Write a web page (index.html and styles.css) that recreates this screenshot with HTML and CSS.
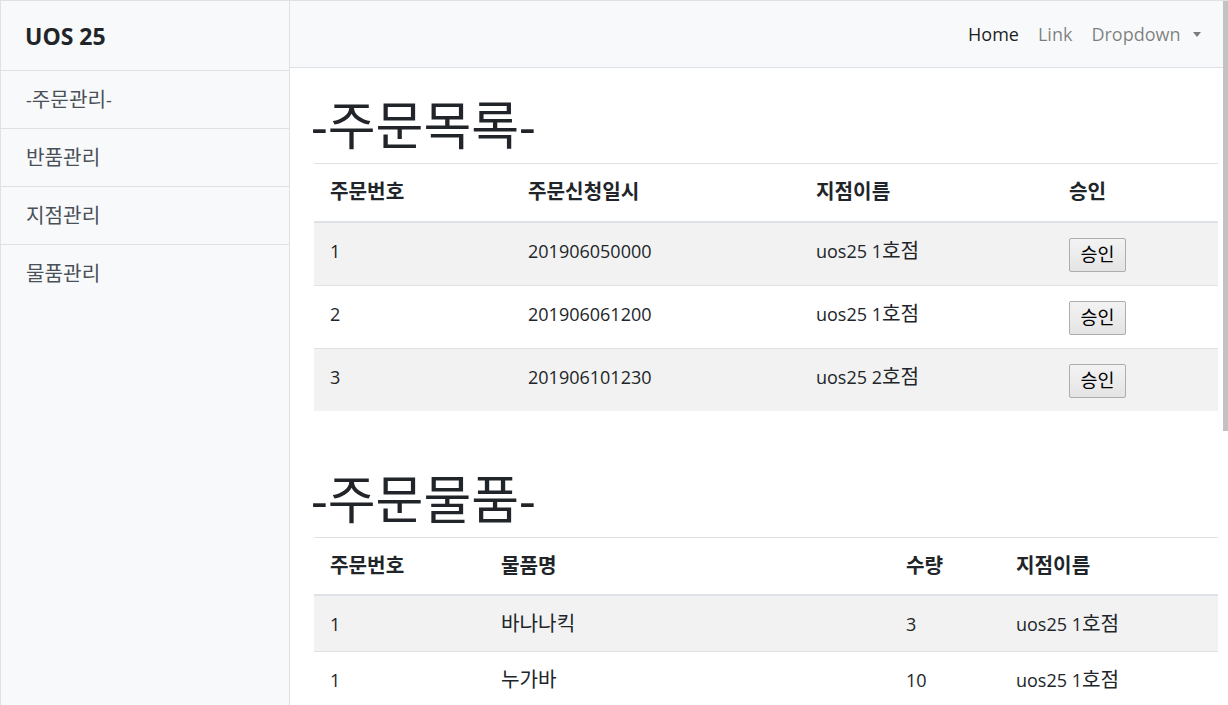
FILE: index.html
```html
<!DOCTYPE html>
<html lang="ko">
<head>
<meta charset="utf-8">
<title>UOS 25</title>
<link rel="stylesheet" href="styles.css">
</head>
<body>
<div class="app">
  <aside class="sidebar">
    <div class="sidebar-heading">UOS 25</div>
    <nav class="side-list">
      <a class="side-item" href="#">-<span class="ko">주문관리</span>-</a>
      <a class="side-item" href="#"><span class="ko">반품관리</span></a>
      <a class="side-item" href="#"><span class="ko">지점관리</span></a>
      <a class="side-item" href="#"><span class="ko">물품관리</span></a>
    </nav>
  </aside>
  <div class="main">
    <header class="topbar">
      <ul class="nav">
        <li><a class="nav-link active" href="#">Home</a></li>
        <li><a class="nav-link" href="#">Link</a></li>
        <li><a class="nav-link" href="#">Dropdown<span class="caret"></span></a></li>
      </ul>
    </header>
    <div class="content">
      <section class="block">
        <h1 class="title">-주문목록-</h1>
        <table class="table orders">
          <colgroup>
            <col class="c1"><col class="c2"><col class="c3"><col class="c4">
          </colgroup>
          <thead>
            <tr><th><span class="ko">주문번호</span></th><th><span class="ko">주문신청일시</span></th><th><span class="ko">지점이름</span></th><th><span class="ko">승인</span></th></tr>
          </thead>
          <tbody>
            <tr><td>1</td><td>201906050000</td><td>uos25 1<span class="ko">호점</span></td><td><button class="btn"><span class="ko">승인</span></button></td></tr>
            <tr><td>2</td><td>201906061200</td><td>uos25 1<span class="ko">호점</span></td><td><button class="btn"><span class="ko">승인</span></button></td></tr>
            <tr><td>3</td><td>201906101230</td><td>uos25 2<span class="ko">호점</span></td><td><button class="btn"><span class="ko">승인</span></button></td></tr>
          </tbody>
        </table>
      </section>
      <section class="block second">
        <h1 class="title">-주문물품-</h1>
        <table class="table items">
          <colgroup>
            <col class="d1"><col class="d2"><col class="d3"><col class="d4">
          </colgroup>
          <thead>
            <tr><th><span class="ko">주문번호</span></th><th><span class="ko">물품명</span></th><th><span class="ko">수량</span></th><th><span class="ko">지점이름</span></th></tr>
          </thead>
          <tbody>
            <tr><td>1</td><td><span class="ko">바나나킥</span></td><td>3</td><td>uos25 1<span class="ko">호점</span></td></tr>
            <tr><td>1</td><td><span class="ko">누가바</span></td><td>10</td><td>uos25 1<span class="ko">호점</span></td></tr>
          </tbody>
        </table>
      </section>
    </div>
  </div>
  <div class="scroll-thumb"></div>
</div>
</body>
</html>
```

FILE: styles.css
```css
* { box-sizing: border-box; }

html, body {
  margin: 0;
  padding: 0;
  height: 100%;
  overflow: hidden;
}

body {
  font-family: "Open Sans", "Noto Sans CJK KR", sans-serif;
  font-size: 18px;
  color: #212529;
  background: #fff;
}

.ko {
  font-size: 1.12em;
  line-height: 1;
}

.app {
  display: flex;
  height: 705px;
  overflow: hidden;
  border-top: 1px solid #dfe1e5;
  border-left: 1px solid #dfe1e5;
  position: relative;
}

/* Sidebar */
.sidebar {
  flex: 0 0 289px;
  width: 289px;
  background: #f8f9fa;
  border-right: 1px solid #dee2e6;
}

.sidebar-heading {
  height: 69px;
  display: flex;
  align-items: center;
  padding-left: 24px;
  font-weight: 700;
  font-size: 23px;
  color: #212529;
}

.side-list {
  display: flex;
  flex-direction: column;
}

.side-item {
  display: flex;
  align-items: center;
  height: 58px;
  padding-left: 25px;
  border-top: 1px solid #dee2e6;
  color: #495057;
  text-decoration: none;
  font-size: 18px;
}

/* Main */
.main {
  flex: 1;
  min-width: 0;
  display: flex;
  flex-direction: column;
}

.topbar {
  height: 67px;
  flex: 0 0 67px;
  background: #f8f9fa;
  border-bottom: 1px solid #dee2e6;
  display: flex;
  align-items: center;
  justify-content: flex-end;
  padding-right: 18px;
}

.nav {
  list-style: none;
  margin: 0;
  padding: 0;
  display: flex;
  align-items: center;
}

.nav-link {
  display: flex;
  align-items: center;
  padding: 0 9.5px;
  color: rgba(0, 0, 0, 0.5);
  text-decoration: none;
  font-size: 18px;
  line-height: 27px;
}

.nav-link.active {
  color: rgba(0, 0, 0, 0.9);
}

.caret {
  display: inline-block;
  margin-left: 12px;
  width: 0;
  height: 0;
  border-top: 5px solid rgba(0, 0, 0, 0.5);
  border-left: 4.5px solid transparent;
  border-right: 4.5px solid transparent;
}

.content {
  padding: 26px 10px 0 24px;
}

.title {
  margin: 0 0 7px -3px;
  font-size: 52px;
  font-weight: 400;
  line-height: 62px;
  color: #212529;
}

.second {
  margin-top: 57px;
}

/* Tables */
.table {
  width: 100%;
  border-collapse: collapse;
  table-layout: fixed;
}

.table th,
.table td {
  text-align: left;
  vertical-align: top;
  padding: 15px 16px 14px;
  line-height: 26px;
  height: 56px;
  border-top: 1px solid #dee2e6;
}

.orders td {
  padding-bottom: 13px;
}

.table th {
  font-weight: 700;
  height: 58px;
}

.table thead th {
  border-bottom: 2px solid #dee2e6;
}

.table tbody tr:nth-child(odd) {
  background: #f2f2f2;
}

.orders .c1 { width: 198px; }
.orders .c2 { width: 288px; }
.orders .c3 { width: 253px; }
.orders .c4 { width: auto; }

.items .d1 { width: 171px; }
.items .d2 { width: 405px; }
.items .d3 { width: 110px; }
.items .d4 { width: auto; }

.btn {
  display: inline-flex;
  align-items: center;
  justify-content: center;
  height: 34px;
  width: 57px;
  padding: 0;
  font-family: "Open Sans", "Noto Sans CJK KR", sans-serif;
  font-size: 16.5px;
  color: #000;
  background: linear-gradient(#f3f3f3, #e4e4e4);
  border: 1px solid #adadad;
  border-radius: 2px;
}

.scroll-thumb {
  position: absolute;
  top: 0;
  right: 0;
  width: 5px;
  height: 430px;
  background: #c2c2c2;
}
```
